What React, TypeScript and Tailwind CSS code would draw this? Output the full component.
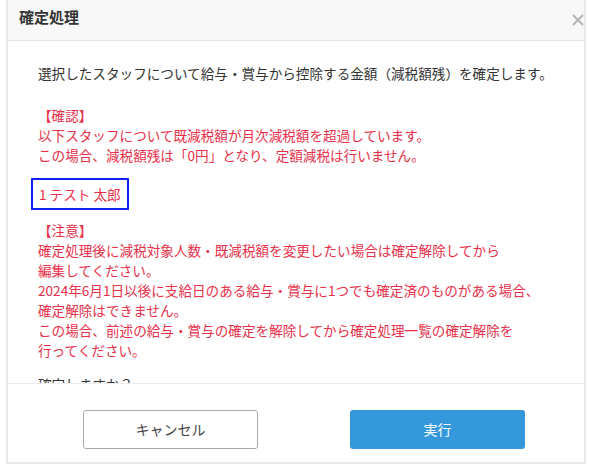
const font = { fontFamily: '"Noto Sans CJK JP", "Noto Sans", sans-serif' };

const App = () => {
  return (
    <div className="w-[589px] h-[466px] bg-white overflow-hidden" style={font}>
      <div className="ml-[6px] w-[580px] h-[464px] border-x-2 border-b-2 border-[#e8e8e8] flex flex-col">
        <div className="h-[41px] shrink-0 bg-[#f8f8f8] border-b border-[#e6e6e6] flex items-start justify-between pl-[11px] pt-[8px]">
          <h4 className="text-[15px] font-bold text-[#333] leading-[18px]">確定処理</h4>
          <svg width="12" height="12" viewBox="0 0 12 12" className="mt-[6px]">
            <path d="M1 1 L11 11 M11 1 L1 11" stroke="#b5b5b5" strokeWidth="2" />
          </svg>
        </div>

        <div className="flex-1 overflow-hidden px-[30px] pt-[22px] text-[13.6px] leading-[20px] text-[#333] whitespace-nowrap">
          <p>選択したスタッフについて給与・賞与から控除する金額（減税額残）を確定します。</p>
          <div className="mt-[22px] text-[#e8304a]">
            <p>【確認】</p>
            <p>以下スタッフについて既減税額が月次減税額を超過しています。</p>
            <p>この場合、減税額残は「0円」となり、定額減税は行いません。</p>
          </div>
          <div className="mt-[13px] -ml-[7px] inline-block border-2 border-[#1020f0] px-[6px] py-[4px] text-[#e8304a]">
            1 テスト 太郎
          </div>
          <div className="mt-[10px] text-[#e8304a]">
            <p>【注意】</p>
            <p>確定処理後に減税対象人数・既減税額を変更したい場合は確定解除してから</p>
            <p>編集してください。</p>
            <p>2024年6月1日以後に支給日のある給与・賞与に1つでも確定済のものがある場合、</p>
            <p>確定解除はできません。</p>
            <p>この場合、前述の給与・賞与の確定を解除してから確定処理一覧の確定解除を</p>
            <p>行ってください。</p>
          </div>
          <p className="mt-[14px]">確定しますか？</p>
        </div>

        <div className="h-[79px] shrink-0 border-t border-[#ececec] bg-white flex items-start pt-[26px] pl-[75px] gap-[92px]">
          <button className="w-[175px] h-[39px] rounded-[3px] border border-[#aaa] bg-white text-[14px] text-[#444]">
            キャンセル
          </button>
          <button className="w-[175px] h-[39px] rounded-[3px] bg-[#3598db] text-[14px] text-white">
            実行
          </button>
        </div>
      </div>
    </div>
  );
};

export default App;
